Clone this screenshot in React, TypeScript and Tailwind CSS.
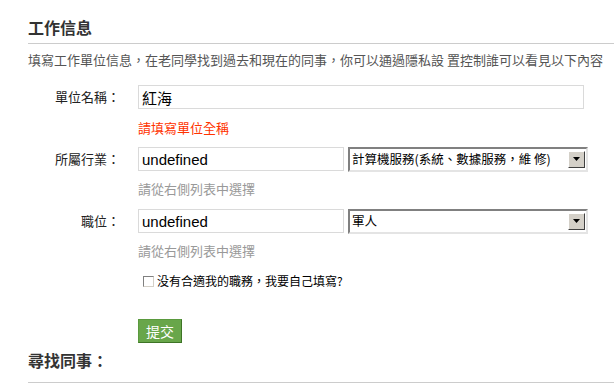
import React from 'react';

const cjk = "font-['Noto_Sans_CJK_TC','Noto_Sans_CJK_SC',sans-serif]";

const FakeSelect: React.FC<{ value: string }> = ({ value }) => (
  <div className="w-[240px] h-[25px] border-2 border-t-[#808080] border-l-[#808080] border-r-[#e4e4e4] border-b-[#e4e4e4] bg-white flex items-center">
    <span className="flex-1 pl-[2px] text-[12.5px] leading-[18px] text-black whitespace-nowrap">{value}</span>
    <div className="w-[17px] h-[17px] mr-[1px] bg-[#d4d0c8] border border-t-white border-l-white border-r-[#404040] border-b-[#404040] flex items-center justify-center">
      <svg width="7" height="4" viewBox="0 0 7 4">
        <path d="M0 0h7L3.5 4z" fill="#000" />
      </svg>
    </div>
  </div>
);

export default function App() {
  return (
    <div className={`w-[614px] h-[386px] overflow-hidden bg-white pl-[28px] ${cjk}`}>
      <h2 className="pt-[18px] h-[43px] text-[16px] leading-[18px] font-bold text-[#333]">工作信息</h2>
      <div className="border-t border-[#cccccc]" />
      <p className="mt-[8px] text-[13px] leading-[16px] text-[#555] whitespace-nowrap">
        填寫工作單位信息，在老同學找到過去和現在的同事，你可以通過隱私設 置控制誰可以看見以下內容
      </p>

      {/* 單位名稱 */}
      <div className="mt-[17px] flex items-center h-[24px]">
        <label className="w-[92px] text-right text-[13px] text-[#222]">單位名稱：</label>
        <input
          readOnly
          value="紅海"
          className="ml-[18px] w-[446px] h-[24px] border border-[#dadada] px-[3px] text-[15px] text-black outline-none"
        />
      </div>
      <p className="mt-[11px] ml-[110px] text-[13px] leading-[16px] text-[#ff3300]">請填寫單位全稱</p>

      {/* 所屬行業 */}
      <div className="mt-[11px] flex items-center h-[24px]">
        <label className="w-[92px] text-right text-[13px] text-[#222]">所屬行業：</label>
        <input
          readOnly
          value="undefined"
          className="ml-[18px] w-[206px] h-[24px] border border-[#dadada] px-[3px] text-[15px] text-black outline-none font-['Liberation_Sans',sans-serif]"
        />
        <div className="ml-[4px]">
          <FakeSelect value="計算機服務(系統、數據服務，維 修)" />
        </div>
      </div>
      <p className="mt-[10px] ml-[110px] text-[13px] leading-[16px] text-[#999]">請從右側列表中選擇</p>

      {/* 職位 */}
      <div className="mt-[12px] flex items-center h-[24px]">
        <label className="w-[92px] text-right text-[13px] text-[#222]">職位：</label>
        <input
          readOnly
          value="undefined"
          className="ml-[18px] w-[206px] h-[24px] border border-[#dadada] px-[3px] text-[15px] text-black outline-none font-['Liberation_Sans',sans-serif]"
        />
        <div className="ml-[4px]">
          <FakeSelect value="軍人" />
        </div>
      </div>
      <p className="mt-[10px] ml-[110px] text-[13px] leading-[16px] text-[#999]">請從右側列表中選擇</p>

      <div className="mt-[14px] ml-[115px] flex items-center h-[16px]">
        <span className="w-[11px] h-[11px] bg-white border border-t-[#808080] border-l-[#808080] border-r-[#d4d0c8] border-b-[#d4d0c8]" />
        <span className="ml-[3px] text-[12px] leading-[16px] text-black">没有合適我的職務，我要自己填寫?</span>
      </div>

      <button className="mt-[30px] ml-[110px] w-[44px] h-[24px] bg-[#68a64a] border border-[#5a9a3e] border-r-[#3d7426] border-b-[#3d7426] text-white text-[14px] leading-[16px] flex items-center justify-center">
        提交
      </button>

      <h2 className="mt-[8px] text-[16px] leading-[18px] font-bold text-[#333]">尋找同事：</h2>
      <div className="mt-[13px] border-t border-[#cccccc]" />
    </div>
  );
}
